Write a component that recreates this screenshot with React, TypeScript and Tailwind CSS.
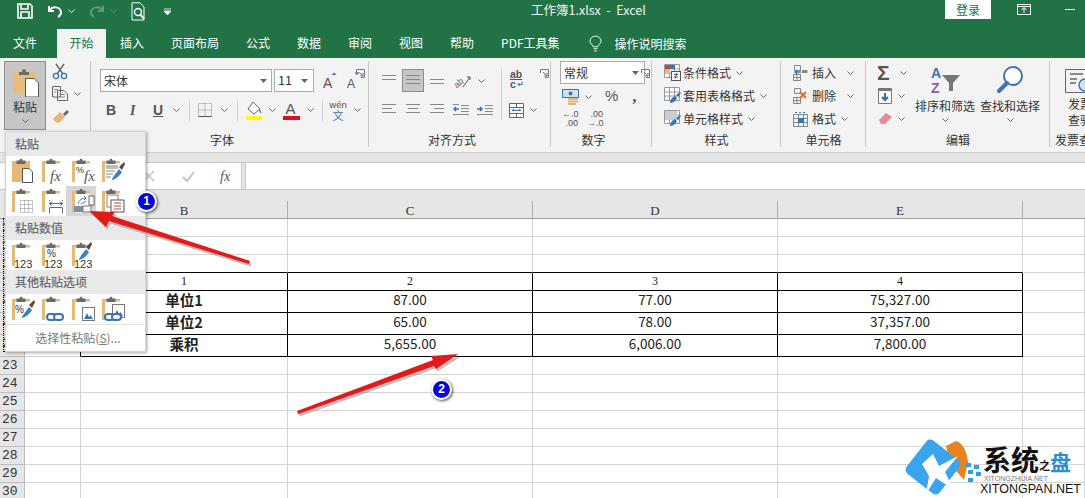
import React from "react";

const Chev = ({ className = "", color = "#666" }: { className?: string; color?: string }) => (
  <svg width="7" height="4" viewBox="0 0 7 4" className={`shrink-0 ${className}`}>
    <path d="M0.5 0.5L3.5 3.5L6.5 0.5" stroke={color} fill="none" />
  </svg>
);

const Tri = ({ className = "" }: { className?: string }) => (
  <svg width="7" height="4" viewBox="0 0 7 4" className={`shrink-0 ${className}`}>
    <path d="M0 0H7L3.5 4Z" fill="#666" />
  </svg>
);

const Launcher = ({ left }: { left: string }) => (
  <svg width="9" height="9" viewBox="0 0 9 9" className={`absolute top-[11px] ${left}`}>
    <path d="M.5 4V.5H8.5V8.5H5M3 3L7 7M7 4V7H4" stroke="#777" fill="none" />
  </svg>
);

const Lines = ({ widths, x = 0 }: { widths: number[]; x?: number }) => (
  <svg width="16" height="14" viewBox="0 0 16 14" className="shrink-0">
    {widths.map((w, i) => (
      <rect key={i} x={x === 0 ? 1 : x === 1 ? (16 - w) / 2 : 15 - w} y={1 + i * 4} width={w} height="1" fill="#888" />
    ))}
  </svg>
);

const Group = ({
  width,
  label,
  launcher,
  children,
}: {
  width: string;
  label?: string;
  launcher?: string;
  children: React.ReactNode;
}) => (
  <div className={`relative flex flex-col shrink-0 ${width}`}>
    <div className="h-[72px]">{children}</div>
    <div className={`h-[22px] flex items-start justify-center text-[12px] leading-[18px] pt-[1px] text-[#333] ${launcher ? "pr-[16px]" : ""}`}>
      {label}
      {launcher && <Launcher left={launcher} />}
    </div>
    <div className="absolute right-0 top-[3px] bottom-[5px] w-px bg-[#c6c6c6]" />
  </div>
);

const Sep = ({ className = "" }: { className?: string }) => <div className={`w-px h-[21px] bg-[#d2d2d2] ${className}`} />;

// popup clipboards
const Clip = ({ fill, children }: { fill?: boolean; children?: React.ReactNode }) => (
  <svg width="24" height="26" viewBox="0 0 24 26" className="shrink-0">
    <path d="M0 3H18V24H0Z" fill="#e4b876" />
    {!fill && <rect x="3" y="5.5" width="15" height="19" fill="#fff" />}
    <path d="M4.5 2.5H7.5C7.5 .2 10.5 .2 10.5 2.5H13.5V6H4.5Z" fill="#6a6a6a" />
    {children}
  </svg>
);

const Page = () => <path d="M10.5 10.5H17L20.5 14V24.5H10.5Z" fill="#fff" stroke="#555" />;
const Fx = ({ x = 8 }: { x?: number }) => (
  <text x={x} y="23" fontFamily="Liberation Serif" fontStyle="italic" fontSize="15" fill="#555">
    fx
  </text>
);
const Brush = () => (
  <>
    <path d="M17 9L22 4L23 6L20 12Z" fill="#5a4a3a" />
    <path d="M10 21C12 17 15 14 17 11L20 14C18 17 15 21 10 22Z" fill="#3f7fc0" />
  </>
);
const N123 = () => (
  <text x="2" y="25.5" fontFamily="Liberation Sans" fontSize="11" fill="#333">
    123
  </text>
);
const Chain = ({ x = 5, y = 18 }: { x?: number; y?: number }) => (
  <g fill="none" stroke="#3b74b4" strokeWidth="2">
    <rect x={x} y={y} width="9" height="6" rx="3" fill="#fff" />
    <rect x={x + 7} y={y} width="9" height="6" rx="3" fill="#fff" />
  </g>
);
const Pic = ({ x = 10, y = 11 }: { x?: number; y?: number }) => (
  <g>
    <rect x={x + 0.5} y={y + 0.5} width="12" height="13" fill="#fff" stroke="#777" />
    <path d={`M${x + 2} ${y + 12}L${x + 5} ${y + 6}L${x + 8} ${y + 12}Z M${x + 6} ${y + 12}L${x + 8.5} ${y + 8}L${x + 11} ${y + 12}Z`} fill="#3b74b4" />
  </g>
);

const PasteCell = ({ children, active }: { children: React.ReactNode; active?: boolean }) => (
  <div className={`w-[30px] h-[30px] flex items-center pl-[6px] ${active ? "bg-[#d6d6d6]" : ""}`}>{children}</div>
);

const PopHeader = ({ children }: { children: React.ReactNode }) => (
  <div className="h-[24px] bg-[#e9e9e9] text-[12px] font-medium leading-[24px] pl-[9px] text-[#6a6a6a]">{children}</div>
);

const PastePopup = () => (
  <div className="absolute left-[5px] top-[131px] w-[141px] h-[221px] bg-white border border-[#d4d4d4] shadow-[1px_1px_3px_rgba(0,0,0,0.35)] overflow-hidden">
    <PopHeader>粘贴</PopHeader>
    <div className="flex">
      <PasteCell>
        <Clip fill>
          <Page />
        </Clip>
      </PasteCell>
      <PasteCell>
        <Clip>
          <Fx />
        </Clip>
      </PasteCell>
      <PasteCell>
        <Clip>
          <text x="4" y="15" fontFamily="Liberation Sans" fontSize="9" fill="#333">%</text>
          <Fx x={12} />
        </Clip>
      </PasteCell>
      <PasteCell>
        <Clip>
          <rect x="4" y="7" width="12" height="4" fill="#bbb" />
          <path d="M4 13H13M4 16H11M4 19H9" stroke="#888" />
          <Brush />
        </Clip>
      </PasteCell>
    </div>
    <div className="flex">
      <PasteCell>
        <Clip>
          <path d="M8.5 12.5H20.5V24.5H8.5ZM12.5 12.5V24.5M16.5 12.5V24.5M8.5 16.5H20.5M8.5 20.5H20.5" stroke="#888" strokeDasharray="1 1" fill="#fff" />
        </Clip>
      </PasteCell>
      <PasteCell>
        <Clip>
          <path d="M7 12H21V25H7Z" fill="#fff" />
          <path d="M7.5 20V25M20.5 20V25M7.5 19.5H20.5M7.5 12V13M20.5 12V13" stroke="#666" fill="none" />
          <path d="M7 15.5H21M7 15.5L10 13.5M7 15.5L10 17.5M21 15.5L18 13.5M21 15.5L18 17.5" stroke="#3b74b4" fill="none" />
        </Clip>
      </PasteCell>
      <PasteCell active>
        <Clip>
          <rect x="2" y="18" width="9" height="6" fill="#7f8fa3" />
          <rect x="11" y="18" width="8" height="6" fill="#fff" stroke="#777" />
          <rect x="17" y="8" width="5" height="9" fill="#fff" stroke="#666" />
          <path d="M6 16C7 12 10 10 14 10M14 10L12 8M14 10L12 12M9 16C11 15 13 14 14 13" stroke="#3b74b4" fill="none" />
        </Clip>
      </PasteCell>
      <PasteCell>
        <Clip>
          <rect x="5" y="7" width="11" height="12" fill="#fff" stroke="#7c8c6c" />
          <rect x="9" y="12" width="13" height="12" fill="#fff" stroke="#555" />
          <path d="M12 15H19M12 18H19M12 21H19" stroke="#b04a3a" />
        </Clip>
      </PasteCell>
    </div>
    <PopHeader>粘贴数值</PopHeader>
    <div className="flex">
      <PasteCell>
        <Clip>
          <N123 />
        </Clip>
      </PasteCell>
      <PasteCell>
        <Clip>
          <text x="5" y="15" fontFamily="Liberation Sans" fontSize="10" fill="#333">%</text>
          <N123 />
        </Clip>
      </PasteCell>
      <PasteCell>
        <Clip>
          <g transform="translate(-3 -4)">
            <Brush />
          </g>
          <N123 />
        </Clip>
      </PasteCell>
    </div>
    <PopHeader>其他粘贴选项</PopHeader>
    <div className="flex">
      <PasteCell>
        <Clip>
          <text x="3" y="17" fontFamily="Liberation Sans" fontSize="10" fill="#333">%</text>
          <Brush />
        </Clip>
      </PasteCell>
      <PasteCell>
        <Clip>
          <Chain x={5} />
        </Clip>
      </PasteCell>
      <PasteCell>
        <Clip>
          <Pic />
        </Clip>
      </PasteCell>
      <PasteCell>
        <Clip>
          <Pic x={10} y={8} />
          <Chain x={3} />
        </Clip>
      </PasteCell>
    </div>
    <div className="mx-[1px] h-[27px] border-t border-[#e2e2e2] flex items-center justify-center text-[12px] text-[#777] pl-[5px]">
      选择性粘贴(<span className="underline">S</span>)...
    </div>
  </div>
);

const TitleBar = () => (
  <div className="h-[29px] bg-[#217346] flex items-center relative text-white">
    <svg width="16" height="16" viewBox="0 0 16 16" className="ml-[17px] mt-[-7px]">
      <path d="M1 1H13L15 3V15H1ZM4 1.5V6H11V1.5M4 15V9H12V15" fill="none" stroke="#fff" strokeWidth="1.6" />
    </svg>
    <svg width="16" height="14" viewBox="0 0 16 14" className="ml-[14px] mt-[-8px]">
      <path d="M2 2V7H7M2 7C5 2 13 2 14 8C14 10 13 12 11 13" fill="none" stroke="#fff" strokeWidth="2" />
    </svg>
    <Chev color="#fff" className="ml-[5px] mt-[-8px]" />
    <svg width="16" height="14" viewBox="0 0 16 14" className="ml-[14px] mt-[-8px]">
      <path d="M14 2V7H9M14 7C11 2 3 2 2 8C2 10 3 12 5 13" fill="none" stroke="#5f9c7e" strokeWidth="2" />
    </svg>
    <Chev color="#5f9c7e" className="ml-[5px] mt-[-8px]" />
    <svg width="15" height="20" viewBox="0 0 15 20" className="ml-[14px] mt-[-6px]">
      <path d="M1 .8H9L13 5V18H1Z" fill="none" stroke="#fff" />
      <circle cx="7" cy="10" r="3.5" fill="none" stroke="#fff" strokeWidth="1.4" />
      <path d="M9.5 13L13 16.5" stroke="#fff" strokeWidth="2" />
    </svg>
    <svg width="7" height="7" viewBox="0 0 7 7" className="ml-[18px] mt-[-7px]">
      <path d="M0 1H7M0 3H7L3.5 7Z" stroke="#fff" strokeWidth=".8" fill="#fff" />
    </svg>
    <div className="absolute left-[531px] top-[1px] text-[12.5px] leading-[17px] whitespace-pre text-[#eef5f1]">工作簿1.xlsx  -  Excel</div>
    <div className="absolute left-[945px] top-0 w-[46px] h-[19px] bg-white text-[#217346] text-[12px] leading-[19px] text-center">登录</div>
    <svg width="14" height="11" viewBox="0 0 14 11" className="absolute left-[1017px] top-[4px]">
      <path d="M.5.5H13.5V10.5H.5ZM.5 2.5H13.5M7 9V4M4.5 6L7 3.5L9.5 6" fill="none" stroke="#fff" />
    </svg>
    <div className="absolute left-[1065px] top-[9px] w-[10px] h-px bg-white" />
  </div>
);

const Tabs = () => (
  <div className="h-[29px] bg-[#217346] flex items-end gap-[27px] pl-[13px] text-white text-[12px] leading-[28px] [&>div]:h-[29px] [&>div]:whitespace-nowrap">
    <div className="w-[24px]">文件</div>
    <div className="ml-[-7px] mr-[-13px] w-[49px] shrink-0 text-center bg-[#f3f3f3] text-[#217346]">开始</div>
    <div>插入</div>
    <div>页面布局</div>
    <div>公式</div>
    <div>数据</div>
    <div>审阅</div>
    <div>视图</div>
    <div>帮助</div>
    <div>PDF工具集</div>
    <div className="flex items-center ml-[2px]">
      <svg width="13" height="18" viewBox="0 0 14 18" className="mr-[13px]">
        <path d="M4.5 12C4 9.5 1 8.5 1 6A6 5.5 0 0 1 13 6C13 8.5 10 9.5 9.5 12ZM5 14H9M5.5 16.5H8.5" fill="none" stroke="#fff" />
      </svg>
      操作说明搜索
    </div>
  </div>
);

const Ribbon = () => (
  <div className="h-[94px] bg-[#f3f3f3] flex text-[#333] text-[12px]">
    <Group width="w-[91px]">
      <div className="flex pt-[3px] pl-[4px]">
        <div className="w-[42px] h-[69px] bg-[#c6c6c6] border border-[#8c8c8c] flex flex-col items-center">
          <svg width="30" height="31" viewBox="0 0 30 31" className="mt-[4px] shrink-0">
            <path d="M3 6H25V28H3Z" fill="#e8bd7c" />
            <path d="M9 6H12C12 2 16 2 16 6H19V9H9Z" fill="#6b6b6b" />
            <path d="M15.5 12.5H24L28.5 17V31H15.5Z" fill="#fff" stroke="#555" />
          </svg>
          <div className="mt-[2px] leading-[16px]">粘贴</div>
          <Chev className="mt-[4px]" />
        </div>
        <div className="flex flex-col items-start pl-[3px] pt-[2px]">
          <svg width="16" height="17" viewBox="0 0 16 17" className="ml-[3px]">
            <path d="M4 1L11 11M12 1L5 11" stroke="#666" strokeWidth="1.4" />
            <circle cx="4" cy="13" r="2.6" fill="none" stroke="#3b74b4" strokeWidth="1.4" />
            <circle cx="12" cy="13" r="2.6" fill="none" stroke="#3b74b4" strokeWidth="1.4" />
          </svg>
          <div className="flex items-center mt-[6px] ml-[3px]">
            <svg width="16" height="15" viewBox="0 0 16 15">
              <path d="M.5.5H8.5V11H.5ZM5.5 4.5H12L15.5 8V14.5H5.5Z" fill="#f3f3f3" stroke="#666" />
              <path d="M2 3.5H6M2 6H4M7.5 8.5H13M7.5 11H13" stroke="#888" />
            </svg>
            <Chev className="ml-[6px]" />
          </div>
          <svg width="17" height="14" viewBox="0 0 17 14" className="ml-[3px] mt-[8px]">
            <path d="M11 5L15 1L17 3L13 7Z" fill="#666" />
            <path d="M1 10L8 3L13 8L7 14C4 14 2 12 1 10Z" fill="#e4b876" />
          </svg>
        </div>
      </div>
    </Group>

    <Group width="w-[278px]" label="字体" launcher="left-[265px]">
      <div className="flex flex-col pt-[11px] pl-[9px]">
        <div className="flex items-center">
          <div className="w-[172px] h-[23px] bg-white border border-[#ababab] flex items-center justify-between px-[3px] pr-[4px] leading-none">
            宋体 <Tri />
          </div>
          <div className="ml-[2px] w-[40px] h-[23px] bg-white border border-[#ababab] flex items-center justify-between pl-[3px] pr-[5px] text-[12.5px]">
            11 <Tri />
          </div>
          <svg width="18" height="18" viewBox="0 0 18 18" className="ml-[8px]">
            <text x="1" y="16" fontFamily="Liberation Sans" fontSize="14" fill="#555">A</text>
            <path d="M9.5 3L12 .5L14.5 3Z" fill="#3b74b4" />
          </svg>
          <svg width="18" height="18" viewBox="0 0 18 18" className="ml-[6px]">
            <text x="1" y="16" fontFamily="Liberation Sans" fontSize="12" fill="#555">A</text>
            <path d="M8.5 .5L11 3L13.5 .5Z" fill="#3b74b4" />
          </svg>
        </div>
        <div className="flex items-center mt-[7px] h-[22px]">
          <span className="ml-[6px] w-[9px] font-bold font-['Liberation_Sans'] text-[14px] text-[#555]">B</span>
          <span className="ml-[15px] w-[9px] italic font-['Liberation_Serif'] font-bold text-[14px] text-[#555]">I</span>
          <span className="ml-[14px] w-[11px] font-bold underline font-['Liberation_Sans'] text-[14px] text-[#555]">U</span>
          <Chev className="ml-[9px]" />
          <Sep className="ml-[9px]" />
          <svg width="14" height="14" viewBox="0 0 14 14" className="ml-[8px]">
            <path d="M.5.5H13.5V13.5H.5ZM7 .5V13.5M.5 7H13.5" stroke="#888" strokeDasharray="1 1" fill="none" />
            <path d="M.5 13.5H13.5" stroke="#555" />
          </svg>
          <Chev className="ml-[9px]" />
          <Sep className="ml-[9px]" />
          <svg width="18" height="19" viewBox="0 0 18 19" className="ml-[7px]">
            <path d="M8 1L15 8L9 13L3 8Z" fill="#fff" stroke="#666" />
            <path d="M14 8C16 10 17 11 16 12C15 12 14 10 14 8Z" fill="#3b74b4" />
            <rect x="1" y="15" width="16" height="4" fill="#ffff00" />
          </svg>
          <Chev className="ml-[6px]" />
          <svg width="17" height="19" viewBox="0 0 17 19" className="ml-[7px]">
            <text x="2.5" y="13" fontFamily="Liberation Sans" fontSize="15" fill="#555">A</text>
            <rect x="0" y="15" width="17" height="4" fill="#e00b1c" />
          </svg>
          <Chev className="ml-[7px]" />
          <Sep className="ml-[8px]" />
          <div className="ml-[7px] w-[16px] flex flex-col items-center text-[9.5px] leading-[10px] text-[#555] font-['Liberation_Sans']">
            wén
            <span className="text-[#3b74b4] text-[11px] leading-[11px] font-['Noto_Sans_CJK_SC']">文</span>
          </div>
          <Chev className="ml-[8px]" />
        </div>
      </div>
    </Group>

    <Group width="w-[182px]" label="对齐方式" launcher="left-[171px]">
      <div className="flex pt-[11px] pl-[12px]">
        <div className="flex flex-col">
          <div className="flex items-center h-[23px] gap-[8px]">
            <Lines widths={[14, 14]} x={1} />
            <div className="w-[22px] h-[23px] -mx-[3px] bg-[#c6c6c6] border border-[#8c8c8c] flex items-center justify-center">
              <Lines widths={[14, 14, 14]} x={1} />
            </div>
            <div className="pt-[8px]">
              <Lines widths={[14, 14]} x={1} />
            </div>
            <svg width="18" height="16" viewBox="0 0 18 16" className="ml-[1px]">
              <text x="0" y="12" fontFamily="Liberation Sans" fontSize="9" fill="#666" transform="rotate(-40 6 10)">ab</text>
              <path d="M9 14L16 4M13 4H16V7" stroke="#555" fill="none" />
            </svg>
            <Chev className="-ml-[2px]" />
          </div>
          <div className="flex items-center h-[22px] mt-[7px] gap-[8px]">
            <Lines widths={[14, 10, 14]} />
            <Lines widths={[14, 10, 14]} x={1} />
            <Lines widths={[14, 10, 14]} x={2} />
            <svg width="16" height="12" viewBox="0 0 16 12">
              <path d="M8 1.5H16M8 4.5H16M8 7.5H16M0 10.5H16" stroke="#888" />
              <path d="M6 5H1M3 3L1 5L3 7" stroke="#3b74b4" strokeWidth="1.5" fill="none" />
              <path d="M0 .5H6" stroke="#888" />
            </svg>
            <svg width="16" height="12" viewBox="0 0 16 12">
              <path d="M8 1.5H16M8 4.5H16M8 7.5H16M0 10.5H16" stroke="#888" />
              <path d="M0 5H5M3 3L5 5L3 7" stroke="#3b74b4" strokeWidth="1.5" fill="none" />
            </svg>
          </div>
        </div>
        <Sep className="h-[52px] ml-[8px] mr-[8px] mt-[-1px]" />
        <div className="flex flex-col">
          <div className="w-[16px] h-[23px] flex flex-col items-start text-[10.5px] leading-[10px] font-['Liberation_Sans'] text-[#555] font-bold">
            <span className="underline">ab</span>
            <span className="flex items-center">
              c
              <svg width="6" height="6" viewBox="0 0 6 6" className="ml-[1px]">
                <path d="M5 .5V3.5H1M2.5 2L1 3.5L2.5 5" stroke="#3b74b4" fill="none" />
              </svg>
            </span>
          </div>
          <div className="flex items-center mt-[7px] h-[22px]">
            <svg width="15" height="15" viewBox="0 0 15 15" className="-ml-[1px]">
              <path d="M.5.5H14.5V14.5H.5ZM.5 4.5H14.5M.5 10.5H14.5M7.5.5V4.5M7.5 10.5V14.5" fill="#fff" stroke="#666" />
              <path d="M3 7.5H12M3 7.5L5 6M12 7.5L10 6" stroke="#3b74b4" fill="none" />
            </svg>
            <Chev className="ml-[6px]" />
          </div>
        </div>
      </div>
    </Group>

    <Group width="w-[101px]" label="数字" launcher="left-[90px]">
      <div className="flex flex-col pt-[3px] pl-[9px]">
        <div className="w-[85px] h-[23px] bg-white border border-[#ababab] flex items-center justify-between px-[3px] pr-[5px]">
          常规 <Tri />
        </div>
        <div className="flex items-center h-[23px] mt-[1px]">
          <svg width="18" height="18" viewBox="0 0 18 18" className="ml-[2px]">
            <rect x=".5" y="1.5" width="16" height="8" fill="#cfe2f3" stroke="#3b74b4" />
            <circle cx="8.5" cy="5.5" r="2" fill="#3b74b4" />
            <path d="M6 11H16M6 13.5H16M6 16H14" stroke="#e4b876" strokeWidth="2" />
          </svg>
          <Chev className="ml-[5px]" />
          <span className="ml-[13px] text-[15px] font-['Liberation_Sans'] text-[#555]">%</span>
          <span className="ml-[14px] text-[17px] leading-[14px] font-bold font-['Liberation_Serif'] text-[#555]">,</span>
        </div>
        <div className="flex items-center h-[23px] mt-[-1px]">
          <div className="ml-[2px] w-[16px] text-[9px] leading-[9px] font-['Liberation_Sans'] text-[#555] text-right">
            <span className="text-[#3b74b4]">←</span>.0
            <br />
            .00
          </div>
          <div className="ml-[9px] w-[16px] text-[9px] leading-[9px] font-['Liberation_Sans'] text-[#555] text-right">
            .00
            <br />
            <span className="text-[#3b74b4]">→</span>.0
          </div>
        </div>
      </div>
    </Group>

    <Group width="w-[129px]" label="样式">
      <div className="flex flex-col pt-[3px] pl-[12px]">
        {[
          ["条件格式", "c"],
          ["套用表格格式", "t"],
          ["单元格样式", "s"],
        ].map(([t, k]) => (
          <div key={k} className="flex items-center h-[23px]">
            <svg width="17" height="17" viewBox="0 0 17 17" className="shrink-0 mr-[2px]">
              <path d="M.5.5H15.5V13.5H.5ZM5.5.5V13.5M10.5.5V13.5M.5 5H15.5M.5 9H15.5" fill="#fff" stroke="#999" />
              {k === "c" ? (
                <>
                  <rect x="1" y="1" width="5" height="4" fill="#b04a3a" />
                  <rect x="6" y="1" width="5" height="4" fill="#3b74b4" />
                  <rect x="1" y="5" width="5" height="4" fill="#e4b876" />
                  <rect x="7.5" y="7.5" width="9" height="9" fill="#fff" stroke="#555" />
                  <path d="M10 10.5H14M10 13H14M13 9L11 14.5" stroke="#555" fill="none" />
                </>
              ) : k === "s" ? (
                <>
                  <rect x="1" y="1" width="12" height="9" fill="#c9ced6" />
                  <path d="M6 16C6 12 9 10 11 9L13 11C12 13 10 16 6 16ZM12 8L16 5L17 6L14 10Z" fill="#3b74b4" />
                </>
              ) : (
                <path d="M6 16C6 12 9 10 11 9L13 11C12 13 10 16 6 16ZM12 8L16 5L17 6L14 10Z" fill="#3b74b4" />
              )}
            </svg>
            {t}
            <Chev className="ml-[5px]" />
          </div>
        ))}
      </div>
    </Group>

    <Group width="w-[85px]" label="单元格">
      <div className="flex flex-col pt-[3px] pl-[12px]">
        {["插入", "删除", "格式"].map((t, i) => (
          <div key={t} className="flex items-center h-[23px]">
            <svg width="15" height="16" viewBox="0 0 15 16" className="shrink-0 mr-[4px]">
              {i === 2 ? (
                <>
                  <path d="M.5 3.5H14.5V15.5H.5ZM5.5 3.5V15.5M10.5 3.5V15.5M.5 7.5H14.5M.5 11.5H14.5" fill="none" stroke="#888" />
                  <rect x="5" y="7" width="6" height="5" fill="#3b74b4" />
                  <path d="M2 1.5H13" stroke="#3b74b4" strokeDasharray="2 2" />
                </>
              ) : (
                <>
                  <path d="M1.5.5H7.5V5.5H1.5ZM.5 9.5H7.5V15.5H.5ZM4 9.5V15.5M.5 12.5H7.5" fill="none" stroke="#888" />
                  {i === 0 ? (
                    <>
                      <path d="M9 6.5H14.5" stroke="#888" strokeWidth="3" />
                      <path d="M8 7H2M4 5L2 7L4 9" stroke="#3b74b4" strokeWidth="1.4" fill="none" />
                    </>
                  ) : (
                    <path d="M7 4L13 10M13 4L7 10" stroke="#e06a3a" strokeWidth="2" />
                  )}
                </>
              )}
            </svg>
            <span className="whitespace-nowrap">{t}</span>
            <Chev className={i === 2 ? "ml-[5px]" : "ml-[11px]"} />
          </div>
        ))}
      </div>
    </Group>

    <Group width="w-[184px]" label="编辑">
      <div className="flex pt-[3px]">
        <div className="flex flex-col pl-[11px] w-[49px] shrink-0">
          <div className="flex items-center h-[23px]">
            <span className="w-[16px] text-[21px] leading-[20px] text-[#555] font-['Liberation_Sans'] font-bold">Σ</span>
            <Chev className="ml-[7px]" />
          </div>
          <div className="flex items-center h-[23px]">
            <svg width="15" height="16" viewBox="0 0 15 16" className="ml-[1px]">
              <path d="M.5.5H13.5V15.5H.5Z" fill="#fff" stroke="#777" />
              <rect x="1" y="1" width="12" height="2" fill="#777" />
              <path d="M7 5V12M4 9L7 12L10 9" stroke="#2f6fb0" strokeWidth="2" fill="none" />
            </svg>
            <Chev className="ml-[5px]" />
          </div>
          <div className="flex items-center h-[23px]">
            <svg width="15" height="13" viewBox="0 0 15 13" className="ml-[1px]">
              <path d="M1 8L8 1L14 5L7 12H3Z" fill="#e78a96" />
            </svg>
            <Chev className="ml-[5px]" />
          </div>
        </div>
        <div className="w-[60px] flex flex-col items-center shrink-0 whitespace-nowrap">
          <svg width="32" height="30" viewBox="0 0 32 30" className="mt-[4px]">
            <text x="2" y="13" fontFamily="Liberation Sans" fontWeight="bold" fontSize="14" fill="#3b74b4">A</text>
            <text x="2" y="28" fontFamily="Liberation Sans" fontWeight="bold" fontSize="14" fill="#8e5fa8">Z</text>
            <path d="M13 10H31L24 18V26H20V18Z" fill="#777" />
          </svg>
          <div className="mt-[3px] leading-[16px]">排序和筛选</div>
          <Chev className="mt-[4px]" />
        </div>
        <div className="w-[60px] ml-[5px] flex flex-col items-center shrink-0 whitespace-nowrap">
          <svg width="28" height="30" viewBox="0 0 28 30" className="mt-[4px]">
            <circle cx="17" cy="11" r="9" fill="#fff" stroke="#3b74b4" strokeWidth="2" />
            <path d="M11 18L3 26" stroke="#3b74b4" strokeWidth="4" strokeLinecap="round" />
          </svg>
          <div className="mt-[3px] leading-[16px]">查找和选择</div>
          <Chev className="mt-[4px]" />
        </div>
      </div>
    </Group>

    <div className="flex-1 flex flex-col overflow-hidden">
      <div className="h-[72px] pl-[15px] pt-[6px] whitespace-nowrap">
        <svg width="24" height="30" viewBox="0 0 24 30" className="block">
          <path d="M.5 5.5H22V28.5H.5Z" fill="#f3f3f3" stroke="#666" />
          <path d="M5 10H18M5 15H12M5 19H11" stroke="#666" strokeWidth="1.6" />
          <circle cx="20" cy="21" r="6" fill="#cfe2f3" stroke="#3b74b4" strokeWidth="1.5" />
        </svg>
        <div className="leading-[16px] ml-[3px] mt-[2px]">
          发票
          <br />
          查验
        </div>
      </div>
      <div className="pl-[5px] pt-[1px] leading-[18px] whitespace-nowrap">发票查验</div>
    </div>
  </div>
);

const FormulaBar = () => (
  <>
    <div className="h-[11px] bg-[#e6e6e6] border-t border-[#cfcfcf] border-b border-b-[#c6c6c6]" />
    <div className="h-[27px] bg-[#e6e6e6] flex border-b border-[#c8c8c8]">
      <div className="w-[142px] shrink-0 bg-white" />
      <div className="w-[100px] shrink-0 bg-white border-r border-[#c8c8c8] flex items-center">
        <svg width="12" height="12" viewBox="0 0 12 12" className="ml-[1px]">
          <path d="M1 1L11 11M11 1L1 11" stroke="#c4c4c4" strokeWidth="1.6" />
        </svg>
        <svg width="13" height="11" viewBox="0 0 13 11" className="ml-[27px]">
          <path d="M1 6L5 10L12 1" stroke="#c4c4c4" strokeWidth="2" fill="none" />
        </svg>
        <span className="ml-[25px] italic font-['Liberation_Serif'] text-[14px] text-[#555]">fx</span>
      </div>
      <div className="w-[3px] shrink-0" />
      <div className="flex-1 bg-white border-l border-[#c8c8c8]" />
    </div>
  </>
);

const colWidths = ["w-[56px]", "w-[207px]", "w-[245px]", "w-[245px]", "w-[245px]", "flex-1"];

const Sheet = () => {
  const rows: { n: number; h: string; vals?: string[]; small?: boolean; top?: boolean; box?: boolean }[] = [
    { n: 16, h: "h-[18px]" },
    { n: 17, h: "h-[18px]" },
    { n: 18, h: "h-[18px]", top: true },
    { n: 19, h: "h-[18px]", vals: ["1", "2", "3", "4"], small: true, box: true },
    { n: 20, h: "h-[22px]", vals: ["单位1", "87.00", "77.00", "75,327.00"], box: true },
    { n: 21, h: "h-[22px]", vals: ["单位2", "65.00", "78.00", "37,357.00"], box: true },
    { n: 22, h: "h-[22px]", vals: ["乘积", "5,655.00", "6,006.00", "7,800.00"], box: true },
    ...[23, 24, 25, 26, 27, 28, 29, 30].map((n) => ({ n, h: "h-[18px]" })),
  ];
  return (
    <div>
      <div className="h-[11px] bg-[#e6e6e6]" />
      <div className="h-[18px] flex bg-[#e6e6e6] border-b border-[#9f9f9f] font-['Liberation_Serif'] text-[13px] leading-[19px] text-[#333]">
        <div className="w-[25px] shrink-0" />
        {["A", "B", "C", "D", "E", ""].map((c, i) => (
          <div key={i} className={`${colWidths[i]} shrink-0 text-center ${i < 5 ? "border-r border-[#acacac]" : ""}`}>
            {c}
          </div>
        ))}
      </div>
      {rows.map((r) => (
        <div key={r.n} className={`${r.h} flex`}>
          <div className="w-[25px] shrink-0 bg-[#e6e6e6] border-b border-r border-[#bdbdbd] pl-[2px] font-['Liberation_Mono'] text-[13px] leading-[17px] text-[#333]">
            {r.n}
          </div>
          {colWidths.map((w, i) => {
            const inBox = i >= 1 && i <= 4;
            const black = (r.box && inBox) || (r.top && inBox);
            const rightBlack = r.box && i <= 4;
            const val = r.vals && inBox ? r.vals[i - 1] : "";
            const font = r.small
              ? "text-[12px] font-['Liberation_Serif'] pb-[2px]"
              : i === 1
                ? "text-[14.5px] font-bold font-['Noto_Sans_CJK_SC'] pb-[3px]"
                : "text-[13.5px] font-['Noto_Sans_CJK_SC'] pb-[3px]";
            return (
              <div
                key={i}
                className={`${w} shrink-0 flex items-center justify-center border-b border-r leading-none text-[#222] ${font} ${
                  black ? "border-b-black" : "border-b-[#d4d4d4]"
                } ${rightBlack ? "border-r-black" : "border-r-[#d4d4d4]"}`}
              >
                {val}
              </div>
            );
          })}
        </div>
      ))}
    </div>
  );
};

const Arrows = () => (
  <svg width="1085" height="498" viewBox="0 0 1085 498" className="absolute left-0 top-0 pointer-events-none">
    <g fill="#8a8a8a" opacity=".55" transform="translate(1.5 2.5)">
      <path d="M250 261L249 264L109 221L106 227L90 211L115 212L112 216Z" />
      <path d="M297 411L298 414L434 366L436 369L458 355L431 356L433 360Z" />
    </g>
    <path d="M250 261L249 264L109 221L106 227L89 211L115 212L112 216Z" fill="#e21a1c" />
    <path d="M297 411L298 414L434 366L436 369L458 354L431 356L433 360Z" fill="#e21a1c" />
  </svg>
);

const Badge = ({ n, pos }: { n: number; pos: string }) => (
  <div
    className={`absolute ${pos} w-[21px] h-[21px] rounded-full bg-[#0606d8] border-2 border-white shadow-[1px_1px_3px_rgba(0,0,0,0.7)] text-white text-[12px] font-bold leading-[17px] text-center font-['Liberation_Sans']`}
  >
    {n}
  </div>
);

const Watermark = () => (
  <div className="absolute left-[900px] top-[434px] w-[185px] h-[64px]">
    <svg width="90" height="64" viewBox="0 0 90 64" className="absolute left-0 top-0">
      <path d="M46 12L56 7C63 9 67 18 68 28L64 46L50 30Z" fill="#e8831f" />
      <rect x="12" y="12" width="42" height="42" rx="5" fill="#3ba4ee" transform="rotate(38 33 33)" />
      <path d="M22 30L33 20L39 32L58 22L45 38L54 56L36 44L26 60L29 42Z" fill="#fff" />
      <path d="M66 29H71V33H66ZM74 31H79V35H74ZM68 36H73V40H68ZM76 38H81V42H76ZM68 44H73V48H68Z" fill="#2ea0e6" />
    </svg>
    <div className="absolute left-[83px] top-[7px] flex items-end whitespace-nowrap font-['Noto_Sans_CJK_SC'] font-bold leading-[36px] text-[#111]">
      <span className="text-[28px]">系统</span>
      <span className="text-[11px] leading-[24px]">之</span>
      <span className="text-[21px] text-[#2b8fd6] leading-[32px]">盘</span>
    </div>
    <div className="absolute left-[84px] top-[41px] text-[7px] leading-[8px] whitespace-nowrap text-[#777] font-['Liberation_Sans']">XITONGZHIJIA.NET</div>
    <div className="absolute left-[80px] top-[49px] text-[12.5px] leading-[12px] whitespace-nowrap text-[#111] font-['Liberation_Sans']">XITONGPAN.NET</div>
  </div>
);

export default function App() {
  return (
    <div className="relative w-[1085px] h-[498px] overflow-hidden bg-white font-['Noto_Sans_CJK_SC',sans-serif]">
      <TitleBar />
      <Tabs />
      <Ribbon />
      <FormulaBar />
      <Sheet />
      <div className="absolute left-[3px] top-[218px] w-[14px] h-[134px] border-l border-b border-dotted border-black" />
      <PastePopup />
      <Arrows />
      <Badge n={1} pos="left-[136px] top-[191px]" />
      <Badge n={2} pos="left-[431px] top-[379px]" />
      <Watermark />
    </div>
  );
}
